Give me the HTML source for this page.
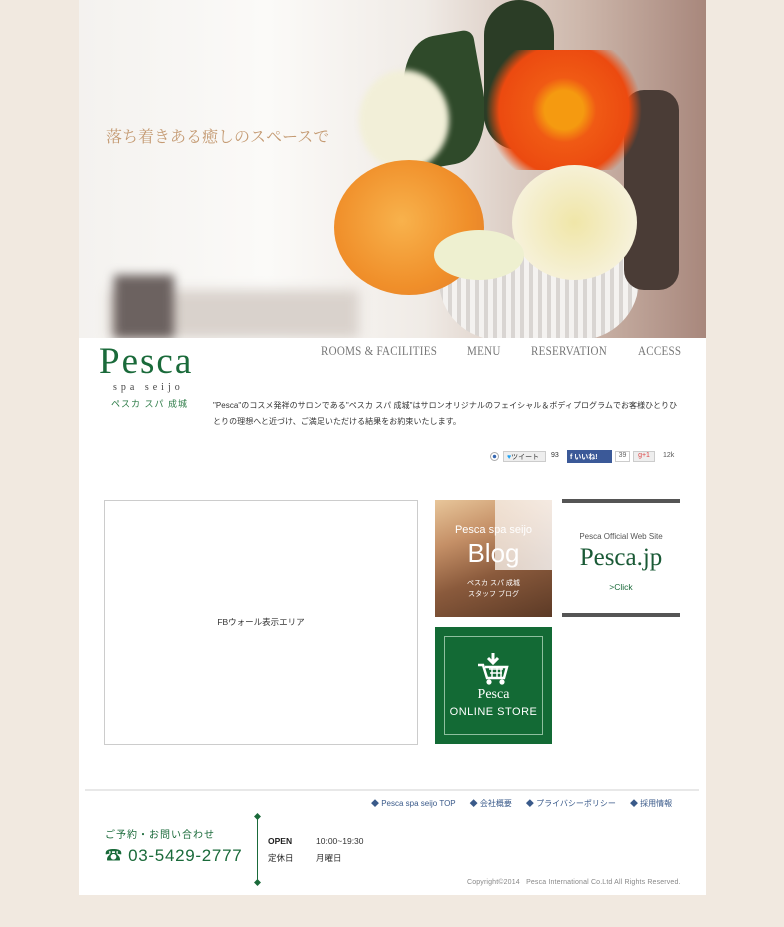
<!DOCTYPE html>
<html><head><meta charset="utf-8"><style>
*{margin:0;padding:0;box-sizing:border-box}
body{width:784px;height:927px;background:#f1e9e0;font-family:"Liberation Sans","Noto Sans CJK JP",sans-serif;position:relative;overflow:hidden}
.wrap{position:absolute;left:79px;top:0;width:627px;height:895px;background:#fff}
.abs{position:absolute}
.hero{left:0;top:0;width:627px;height:338px;overflow:hidden;background:linear-gradient(90deg,#f4f2ef 0%,#fbfaf8 30%,#f0ebe6 55%,#cdb7ab 80%,#a8877c 100%)}
.serif{font-family:"Liberation Serif","Noto Serif CJK SC",serif}
.nav{top:343px;font-family:"Liberation Serif",serif;color:#777;font-size:13px;letter-spacing:.3px;transform:scaleX(.85);transform-origin:left top;white-space:nowrap}
.small{font-size:8.5px;color:#333}
</style></head><body>
<div class="wrap">
<div class="abs hero">
 <div class="abs" style="left:30px;top:290px;width:250px;height:48px;background:#d9d2cc;filter:blur(6px)"></div>
 <div class="abs" style="left:35px;top:275px;width:60px;height:63px;background:#6c6260;filter:blur(5px)"></div>
 <div class="abs" style="left:360px;top:250px;width:200px;height:90px;background:repeating-linear-gradient(90deg,#d9d5d2 0 4px,#f4f2f0 4px 9px);border-radius:0 0 60px 60px"></div>
 <div class="abs" style="left:545px;top:90px;width:55px;height:200px;background:#4a3c36;border-radius:20px"></div>
 <div class="abs" style="left:325px;top:35px;width:80px;height:130px;background:#2f4a2a;border-radius:50% 10px;transform:rotate(-10deg)"></div>
 <div class="abs" style="left:405px;top:0;width:70px;height:150px;background:#2b3d26;border-radius:40px"></div>
 <div class="abs" style="left:280px;top:70px;width:90px;height:100px;background:#f2efd8;border-radius:50%;filter:blur(3px)"></div>
 <div class="abs" style="left:395px;top:50px;width:180px;height:120px;background:radial-gradient(circle,#f59a10 0 18%,#f05a14 30%,#ec4a10 60%,transparent 72%)"></div>
 <div class="abs" style="left:255px;top:160px;width:150px;height:135px;background:radial-gradient(circle at 45% 45%,#f8b24c,#f08f2a 60%,#e07a2a);border-radius:50%"></div>
 <div class="abs" style="left:433px;top:165px;width:125px;height:115px;background:radial-gradient(circle,#f0e6a8,#f6f1d8 70%);border-radius:50%"></div>
 <div class="abs" style="left:355px;top:230px;width:90px;height:50px;background:#eef0d0;border-radius:50%"></div>
 <div class="abs serif" style="left:27px;top:124px;font-size:16px;color:#c49a72;letter-spacing:0">落ち着きある癒しのスペースで</div>
</div>
<div class="abs serif" style="left:20px;top:340px;font-size:37px;color:#1a6a3a;letter-spacing:2px">Pesca</div>
<div class="abs serif" style="left:34px;top:382px;font-size:10px;color:#444;letter-spacing:4px">spa seijo</div>
<div class="abs" style="left:32px;top:397px;font-size:9px;color:#2a7a45;letter-spacing:1px">ペスカ スパ 成城</div>
<div class="abs nav" style="left:242px">ROOMS &amp; FACILITIES</div>
<div class="abs nav" style="left:388px">MENU</div>
<div class="abs nav" style="left:452px">RESERVATION</div>
<div class="abs nav" style="left:559px">ACCESS</div>
<div class="abs small" style="left:134px;top:398px;width:470px;line-height:16px;font-size:8px;letter-spacing:.05px">"Pesca"のコスメ発祥のサロンである"ペスカ スパ 成城"はサロンオリジナルのフェイシャル＆ボディプログラムでお客様ひとりひとりの理想へと近づけ、ご満足いただける結果をお約束いたします。</div>
<div class="abs" style="left:411px;top:452px;width:9px;height:9px;border:1px solid #aaa;border-radius:50%;background:radial-gradient(#3566b0 30%,#fff 40%)"></div>
<div class="abs" style="left:424px;top:451px;width:43px;height:11px;background:#eee;border:1px solid #ccc;font-size:7px;color:#333;padding-left:3px"><span style="color:#1da1f2">♥</span>ツイート</div>
<div class="abs" style="left:472px;top:452px;font-size:7px;color:#333">93</div>
<div class="abs" style="left:488px;top:450px;width:45px;height:13px;background:#3b5998;color:#fff;font-size:7px;font-weight:bold;padding:2px 3px">f いいね!</div>
<div class="abs" style="left:536px;top:451px;width:15px;height:11px;border:1px solid #ccc;font-size:7px;color:#666;text-align:center">39</div>
<div class="abs" style="left:554px;top:451px;width:22px;height:11px;background:#eee;border:1px solid #ccc;font-size:7px;color:#d44;text-align:center">g+1</div>
<div class="abs" style="left:584px;top:452px;font-size:7px;color:#555">12k</div>
<div class="abs" style="left:25px;top:500px;width:314px;height:245px;border:1px solid #ccc;font-size:8.5px;color:#333;text-align:center;line-height:243px">FBウォール表示エリア</div>
<div class="abs" style="left:356px;top:500px;width:117px;height:117px;background:linear-gradient(160deg,#e8c69a 0%,#c59067 30%,#8a5a3c 60%,#5c3a26 100%);overflow:hidden">
 <div class="abs" style="left:60px;top:0;width:57px;height:70px;background:linear-gradient(90deg,#f6eee6,#fff);opacity:.8"></div>
 <div class="abs" style="left:0;top:24px;width:117px;text-align:center;color:#fff;font-size:11px">Pesca spa seijo</div>
 <div class="abs" style="left:0;top:38px;width:117px;text-align:center;color:#fff;font-size:26px">Blog</div>
 <div class="abs" style="left:0;top:78px;width:117px;text-align:center;color:#fff;font-size:7px;line-height:11px">ペスカ スパ 成城<br>スタッフ ブログ</div>
</div>
<div class="abs" style="left:483px;top:499px;width:118px;height:4px;background:#555"></div>
<div class="abs" style="left:483px;top:613px;width:118px;height:4px;background:#555"></div>
<div class="abs" style="left:483px;top:532px;width:118px;text-align:center;font-size:8px;color:#555">Pesca Official Web Site</div>
<div class="abs serif" style="left:483px;top:544px;width:118px;text-align:center;font-size:25px;color:#1a5a36">Pesca.jp</div>
<div class="abs" style="left:483px;top:582px;width:118px;text-align:center;font-size:8.5px;color:#1a6a3a">&gt;Click</div>
<div class="abs" style="left:356px;top:627px;width:117px;height:117px;background:#136a35">
 <div class="abs" style="left:9px;top:9px;width:99px;height:99px;border:1px solid #8fbf9f"></div>
 <svg class="abs" style="left:42px;top:25px" width="32" height="34" viewBox="0 0 32 34"><path d="M16 1v9M11 6l5 5 5-5" stroke="#fff" stroke-width="3" fill="none"/><path d="M1 13h5l4 13h17l3-11H8" stroke="#fff" stroke-width="2.5" fill="none"/><path d="M12 17h14M13 21h12M15 15v10M20 15v10M24 15v10" stroke="#fff" stroke-width="1.5"/><circle cx="12" cy="30" r="2.6" fill="#fff"/><circle cx="25" cy="30" r="2.6" fill="#fff"/></svg>
 <div class="abs serif" style="left:0;top:60px;width:117px;text-align:center;color:#fff;font-size:14px">Pesca</div>
 <div class="abs" style="left:0;top:79px;width:117px;text-align:center;color:#fff;font-size:11px;letter-spacing:.5px">ONLINE STORE</div>
</div>
<div class="abs" style="left:6px;top:789px;width:614px;height:2px;background:#e8e8e8"></div>
<div class="abs" style="left:292px;top:798px;font-size:8px;color:#3a5a8a;white-space:nowrap">◆ Pesca spa seijo TOP<span style="margin-left:14px">◆ 会社概要</span><span style="margin-left:14px">◆ プライバシーポリシー</span><span style="margin-left:14px">◆ 採用情報</span></div>
<div class="abs" style="left:26px;top:826px;font-size:10px;color:#1a6a3a;letter-spacing:1px">ご予約・お問い合わせ</div>
<div class="abs" style="left:26px;top:841px;font-size:17px;color:#1a6a3a;letter-spacing:.7px">☎ 03-5429-2777</div>
<div class="abs" style="left:178px;top:816px;width:1px;height:68px;background:#1a6a3a"></div>
<div class="abs" style="left:175px;top:813px;width:7px;height:7px;background:#1a6a3a;transform:rotate(45deg) scale(.7)"></div>
<div class="abs" style="left:175px;top:879px;width:7px;height:7px;background:#1a6a3a;transform:rotate(45deg) scale(.7)"></div>
<div class="abs" style="left:189px;top:836px;font-size:8.5px;color:#222;font-weight:bold">OPEN</div>
<div class="abs" style="left:237px;top:836px;font-size:8.5px;color:#333">10:00~19:30</div>
<div class="abs" style="left:189px;top:852px;font-size:8.5px;color:#222">定休日</div>
<div class="abs" style="left:237px;top:852px;font-size:8.5px;color:#333">月曜日</div>
<div class="abs" style="left:388px;top:879px;font-size:7px;color:#888;white-space:nowrap;letter-spacing:.15px">Copyright©2014 &nbsp; Pesca International Co.Ltd All Rights Reserved.</div>
</div>
</body></html>
